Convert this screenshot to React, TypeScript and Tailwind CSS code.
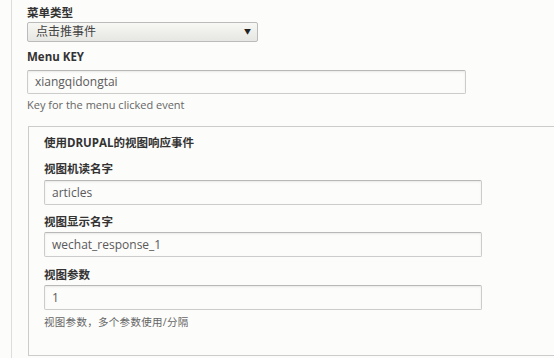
const FONT = "font-['Open_Sans','Noto_Sans_CJK_SC',sans-serif]";

function Label({ children }: { children: React.ReactNode }) {
  return <div className="text-[11.5px] font-bold leading-[14px] text-[#333]">{children}</div>;
}

function TextInput({ value, width, className = "" }: { value: string; width: string; className?: string }) {
  return (
    <div
      className={`${width} ${className} flex h-[25px] items-center rounded-[2px] border border-[#ccc] border-t-[#b8b8b8] bg-[#fcfcfa] px-[7px] text-[12px] text-[#5a5a5a] shadow-[inset_0_1px_2px_rgba(0,0,0,0.08)]`}
    >
      {value}
    </div>
  );
}

export default function App() {
  return (
    <div className={`${FONT} h-[358px] w-[554px] overflow-hidden bg-[#fcfcfa]`}>
      <div className="ml-[11px] h-full border-l border-[#ddd] pl-[15px] pt-[6px]">
        <Label>菜单类型</Label>
        <div className="mt-[2px] flex h-[20px] w-[231px] items-center justify-between rounded-[2px] border border-[#bbb] bg-gradient-to-b from-[#f7f7f4] to-[#e6e6e2] pl-[8px] pr-[6px] text-[12px] text-[#444]">
          <span>点击推事件</span>
          <span className="text-[7px] text-[#222]">▼</span>
        </div>

        <div className="mt-[8px]">
          <Label>Menu KEY</Label>
        </div>
        <TextInput value="xiangqidongtai" width="w-[439px]" className="mt-[6px] !h-[24px]" />
        <div className="mt-[4px] text-[11px] leading-[14px] text-[#666]">Key for the menu clicked event</div>

        <div className="ml-[1px] mt-[14px] w-[560px] border border-[#ccc] pb-[26px] pl-[15px] pt-[9px]">
          <div className="text-[11.5px] font-bold leading-[14px] text-[#333]">使用DRUPAL的视图响应事件</div>

          <div className="mt-[12px]">
            <Label>视图机读名字</Label>
          </div>
          <TextInput value="articles" width="w-[438px]" className="mt-[4px]" />

          <div className="mt-[10px]">
            <Label>视图显示名字</Label>
          </div>
          <TextInput value="wechat_response_1" width="w-[438px]" className="mt-[3px]" />

          <div className="mt-[11px]">
            <Label>视图参数</Label>
          </div>
          <TextInput value="1" width="w-[438px]" className="mt-[3px]" />
          <div className="mt-[5px] text-[10.5px] leading-[14px] tracking-[0.3px] text-[#666]">视图参数，多个参数使用/分隔</div>
        </div>
      </div>
    </div>
  );
}
